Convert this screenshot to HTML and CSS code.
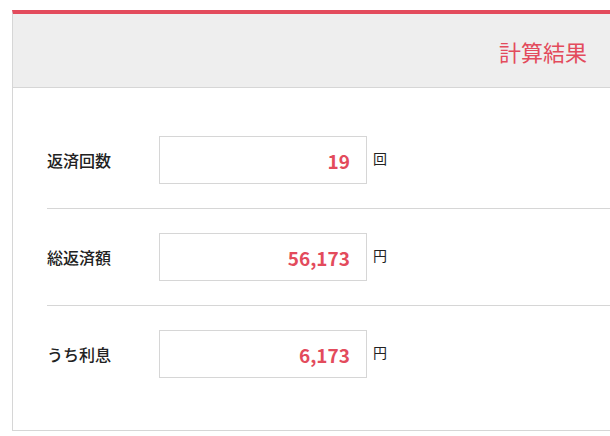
FILE: index.html
```html
<!DOCTYPE html>
<html lang="ja">
<head>
    <meta charset="UTF-8">
    <meta name="viewport" content="width=device-width, initial-scale=1.0">
    <title>計算結果</title>
    <link rel="stylesheet" href="styles.css">
</head>
<body>

<div class="result-card">
    <div class="result-head">
        <h2>計算結果</h2>
    </div>
    <div class="result-body">
        <div class="result-row">
            <span class="label">返済回数</span>
            <div class="value">19</div>
            <span class="unit">回</span>
        </div>
        <div class="result-row">
            <span class="label">総返済額</span>
            <div class="value">56,173</div>
            <span class="unit">円</span>
        </div>
        <div class="result-row last">
            <span class="label">うち利息</span>
            <div class="value">6,173</div>
            <span class="unit">円</span>
        </div>
    </div>
</div>

</body>
</html>
```

FILE: styles.css
```css
html, body {
    overflow: hidden;
}
body {
    font-family: "Noto Sans CJK JP", "Noto Sans", sans-serif;
    margin: 0;
    background-color: #fff;
    color: #222;
}
.result-card {
    margin: 10px 0 0 12px;
    width: 620px;
    border: 1px solid #d6d6d6;
    border-top: 4px solid #e34b5c;
    box-sizing: border-box;
}
.result-head {
    height: 73px;
    background-color: #eeeeee;
    border-bottom: 1px solid #d6d6d6;
    display: flex;
    align-items: center;
    justify-content: flex-end;
    padding-right: 44px;
}
.result-head h2 {
    margin: 0;
    font-size: 22px;
    font-weight: normal;
    color: #e34b5c;
    line-height: 1;
}
.result-body {
    padding: 24px 0 28px 34px;
}
.result-row {
    display: flex;
    align-items: center;
    padding: 24px 0;
    border-bottom: 1px solid #d6d6d6;
}
.result-row.last {
    border-bottom: none;
}
.label {
    width: 112px;
    font-size: 16px;
    font-weight: 500;
}
.value {
    width: 208px;
    height: 48px;
    box-sizing: border-box;
    border: 1px solid #d6d6d6;
    padding-right: 16px;
    display: flex;
    align-items: center;
    justify-content: flex-end;
    font-size: 19px;
    font-weight: bold;
    color: #e34b5c;
}
.unit {
    margin-left: 6px;
    font-size: 14px;
    margin-top: -4px;
}
```
